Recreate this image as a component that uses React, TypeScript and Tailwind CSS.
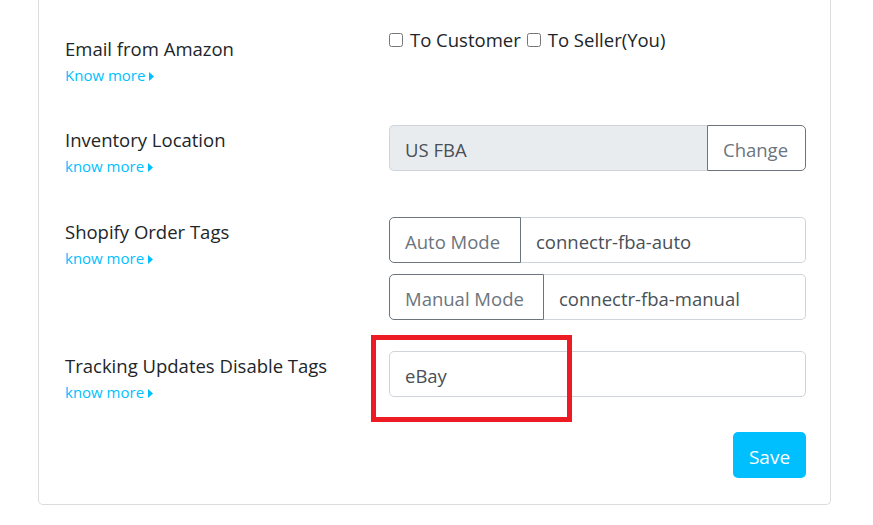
import React from "react";

const font = { fontFamily: '"Open Sans", "Noto Sans", Arial, sans-serif' };

function KnowMore({ text }: { text: string }) {
  return (
    <a className="relative top-[1px] flex items-center gap-[4px] text-[15px] leading-[23px] text-[#00bfff]">
      {text}
      <svg width="5" height="9" viewBox="0 0 5 9" className="mt-[1px]">
        <path d="M0 0 L5 4.5 L0 9 Z" fill="#00bfff" />
      </svg>
    </a>
  );
}

function Label({ title, more, pad = "" }: { title: string; more: string; pad?: string }) {
  return (
    <div className={`w-[324px] shrink-0 ${pad}`}>
      <div className="text-[18.5px] leading-[29px] text-[#212529]">{title}</div>
      <KnowMore text={more} />
    </div>
  );
}

function Addon({ text, width, side }: { text: string; width: string; side: "left" | "right" }) {
  return (
    <div
      className={`flex h-[46px] items-center border border-[#6c757d] px-[15px] pt-[4px] text-[18.5px] text-[#6c757d] ${width} ${
        side === "left" ? "rounded-l-[5px]" : "rounded-r-[5px]"
      }`}
    >
      {text}
    </div>
  );
}

export default function App() {
  return (
    <div className="min-h-screen bg-white" style={font}>
      <div className="ml-[38px] w-[793px] rounded-b-[5px] border border-t-0 border-[#dcdcdc] pb-[26px] pl-[26px] pr-[24px] pt-[25px]">
        {/* Email from Amazon */}
        <div className="flex items-start">
          <Label title="Email from Amazon" more="Know more" pad="pt-[9px]" />
          <div className="flex items-center text-[18.5px] leading-[29px] text-[#212529]">
            <label className="flex items-center">
              <input type="checkbox" className="m-0 h-[14px] w-[14px]" />
              <span className="ml-[7px]">To Customer</span>
            </label>
            <label className="ml-[6px] flex items-center">
              <input type="checkbox" className="m-0 h-[14px] w-[14px]" />
              <span className="ml-[7px]">To Seller(You)</span>
            </label>
          </div>
        </div>

        {/* Inventory Location */}
        <div className="mt-[39px] flex items-start">
          <Label title="Inventory Location" more="know more" />
          <div className="flex w-[417px]">
            <div className="flex h-[46px] flex-1 items-center rounded-l-[5px] border border-r-0 border-[#ced4da] bg-[#e9ecef] px-[15px] pt-[4px] text-[18.5px] text-[#495057]">
              US FBA
            </div>
            <Addon text="Change" width="w-[99px]" side="right" />
          </div>
        </div>

        {/* Shopify Order Tags */}
        <div className="mt-[40px] flex items-start">
          <Label title="Shopify Order Tags" more="know more" />
          <div className="flex w-[417px] flex-col gap-[11px]">
            <div className="flex">
              <Addon text="Auto Mode" width="w-[132px]" side="left" />
              <div className="flex h-[46px] flex-1 items-center rounded-r-[5px] border border-l-0 border-[#ced4da] px-[15px] pt-[4px] text-[18.5px] text-[#495057]">
                connectr-fba-auto
              </div>
            </div>
            <div className="flex">
              <Addon text="Manual Mode" width="w-[155px]" side="left" />
              <div className="flex h-[46px] flex-1 items-center rounded-r-[5px] border border-l-0 border-[#ced4da] px-[15px] pt-[4px] text-[18.5px] text-[#495057]">
                connectr-fba-manual
              </div>
            </div>
          </div>
        </div>

        {/* Tracking Updates Disable Tags */}
        <div className="mt-[31px] flex items-start">
          <Label title="Tracking Updates Disable Tags" more="know more" />
          <div className="relative w-[417px]">
            <div className="flex h-[46px] items-center rounded-[5px] border border-[#ced4da] px-[15px] pt-[4px] text-[18.5px] text-[#495057]">
              eBay
            </div>
            <div className="absolute left-[-18px] top-[-16px] h-[87px] w-[201px] border-[5px] border-[#ed1c24]" />
          </div>
        </div>

        <div className="mt-[29px] flex justify-end">
          <button className="h-[46px] w-[73px] rounded-[5px] bg-[#00bfff] pt-[4px] text-[19px] text-white">Save</button>
        </div>
      </div>
    </div>
  );
}
